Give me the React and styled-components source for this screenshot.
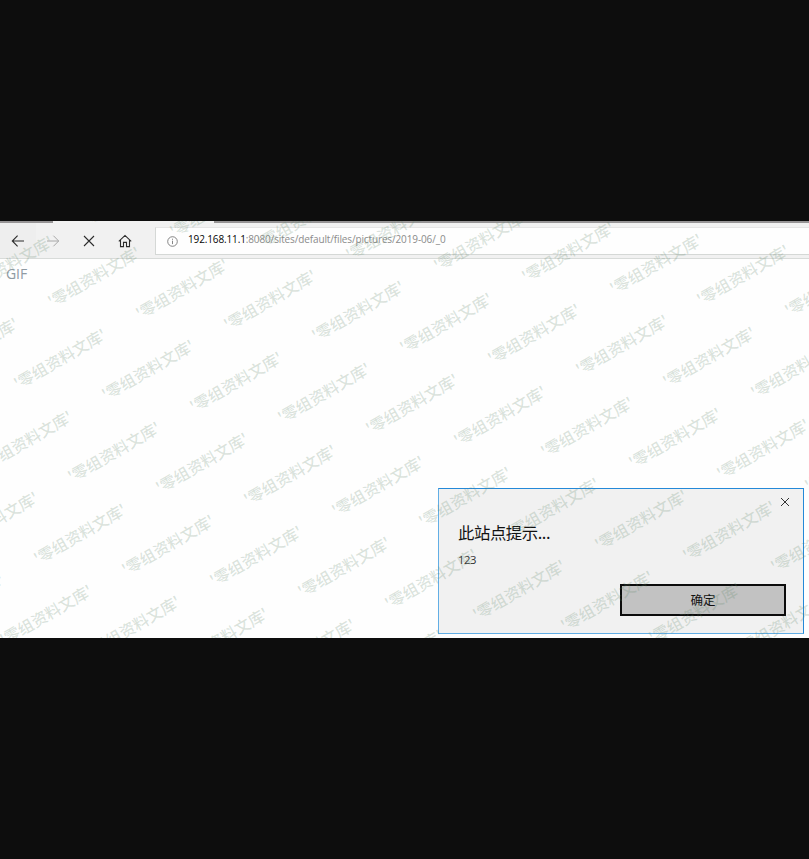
import React from "react";
import styled, { createGlobalStyle } from "styled-components";

const GlobalStyle = createGlobalStyle`
  * { box-sizing: border-box; }
  body { margin: 0; background: #0d0d0d; }
`;

const cjk = `"Noto Sans CJK SC", sans-serif`;

const Stage = styled.main`
  height: 859px;
  padding-top: 221px;
  background: #0d0d0d;
  overflow: hidden;
  font-family: "Open Sans", ${cjk};
`;

const Browser = styled.section`
  position: relative;
  display: flex;
  flex-direction: column;
  height: 417px;
  background: #fefefe;
  overflow: hidden;
`;

const TabStrip = styled.div`
  height: 2px;
  padding-left: 53px;
  background: #969495;
`;

const ActiveTab = styled.div`
  width: 161px;
  height: 2px;
  background: #f1f1f1;
`;

const Toolbar = styled.nav`
  display: flex;
  align-items: flex-start;
  height: 36px;
  background: #f1f1f1;
  border-bottom: 1px solid #d8dbd9;
`;

const NavButton = styled.button`
  display: grid;
  place-items: center;
  width: 35.6px;
  height: 35px;
  padding: 0;
  border: 0;
  background: ${(p) => (p.$active ? "#eeeeee" : "transparent")};
  color: ${(p) => (p.$disabled ? "#a8a8a8" : "#2c2c2c")};
`;

const Address = styled.div`
  display: flex;
  align-items: center;
  flex: 1;
  height: 28px;
  margin: 4px 0 0 12.6px;
  padding-left: 11px;
  background: #fefefe;
  border: 1px solid #d5d8d6;
  border-top-color: #e5e5e5;
  border-right: 0;
  color: #777;
`;

const Url = styled.span`
  margin: -4px 0 0 10px;
  font-size: 10px;
  line-height: 14px;
  letter-spacing: -0.13px;
  color: #8b8b8b;
  white-space: nowrap;
`;

const Host = styled.span`
  color: #050505;
`;

const Page = styled.div`
  display: flex;
  flex: 1;
  justify-content: space-between;
  align-items: flex-start;
  padding: 6px 5px 0 6px;
`;

const Alt = styled.span`
  font-size: 14px;
  line-height: 18px;
  letter-spacing: -0.1px;
  color: #8f9aa3;
`;

const Dialog = styled.section`
  width: 366px;
  height: 146px;
  margin-top: 223px;
  padding: 0 17px 0 19px;
  display: flex;
  flex-direction: column;
  background: #f1f1f1;
  border: 1px solid #2489d8;
  border-left-color: #62aee5;
  border-bottom-color: #62aee5;
`;

const Close = styled.button`
  align-self: flex-end;
  height: 10px;
  margin: 8px -4px 0 0;
  padding: 0;
  border: 0;
  width: 11px;
  background: none;
  color: #333;
  line-height: 0;
`;

const Title = styled.h1`
  margin: 13px 0 0;
  font: 400 16.4px/24px ${cjk};
  letter-spacing: -0.45px;
  color: #111;
`;

const Message = styled.p`
  margin: 8px 0 0;
  font-size: 11.3px;
  line-height: 16px;
  letter-spacing: -0.5px;
  color: #333;
`;

const Confirm = styled.button`
  align-self: flex-end;
  width: 166px;
  height: 32px;
  margin-top: 16px;
  padding: 0;
  background: #c2c2c2;
  border: 2px solid #0c0c0c;
  font: 400 12.5px/20px ${cjk};
  color: #111;
`;

const Watermarks = styled.div`
  position: absolute;
  inset: 0;
  pointer-events: none;
`;

const Mark = styled.span`
  position: absolute;
  width: 120px;
  height: 24px;
  margin: -12px 0 0 -60px;
  text-align: center;
  font: 500 15.7px/24px ${cjk};
  color: rgba(90, 130, 100, 0.22);
  white-space: nowrap;
  transform: rotate(-30deg);
`;

const marks = [];
for (let row = -4; row <= 6; row++) {
  for (let col = -4; col <= 13; col++) {
    const x = 60.3 + col * 87.85 - row * 34.1;
    const y = 138 + col * 11.3 + row * 81.6;
    if (x > -48 && x < 857 && y > -28 && y < 445) marks.push({ x, y });
  }
}

const Icon = ({ size, children, weight = 1 }) => (
  <svg width={size} height={size} viewBox={`0 0 ${size} ${size}`} fill="none" stroke="currentColor" strokeWidth={weight}>
    {children}
  </svg>
);

export default function App() {
  return (
    <Stage>
      <GlobalStyle />
      <Browser>
        <TabStrip><ActiveTab /></TabStrip>
        <Toolbar>
          <NavButton $active aria-label="Back">
            <Icon size={14} weight={1.1}><path d="M13 7H1.3M6.6 1.7 1.3 7l5.3 5.3" /></Icon>
          </NavButton>
          <NavButton $disabled aria-label="Forward">
            <Icon size={14} weight={1}><path d="M1 7h11.7M7.4 1.7 12.7 7l-5.3 5.3" /></Icon>
          </NavButton>
          <NavButton aria-label="Stop">
            <Icon size={12} weight={1.1}><path d="m1 1 10 10M11 1 1 11" /></Icon>
          </NavButton>
          <NavButton aria-label="Home">
            <Icon size={14} weight={1.1}><path d="M.8 7.3 7 1.4l6.2 5.9M2.5 6v6.6h3V8.4h3v4.2h3V6" /></Icon>
          </NavButton>
          <Address>
            <Icon size={11} weight={0.9}>
              <circle cx="5.5" cy="5.5" r="4.8" />
              <path d="M5.5 4.7v3.4M5.5 2.7v1.1" />
            </Icon>
            <Url><Host>192.168.11.1</Host>:8080/sites/default/files/pictures/2019-06/_0</Url>
          </Address>
        </Toolbar>
        <Page>
          <Alt>GIF</Alt>
          <Dialog role="dialog">
            <Close aria-label="Close">
              <Icon size={10}><path d="m1 1 8 8M9 1 1 9" /></Icon>
            </Close>
            <Title>此站点提示...</Title>
            <Message>123</Message>
            <Confirm>确定</Confirm>
          </Dialog>
        </Page>
        <Watermarks aria-hidden="true">
          {marks.map(({ x, y }, i) => (
            <Mark key={i} style={{ left: x, top: y }}>'零组资料文库'</Mark>
          ))}
        </Watermarks>
      </Browser>
    </Stage>
  );
}
